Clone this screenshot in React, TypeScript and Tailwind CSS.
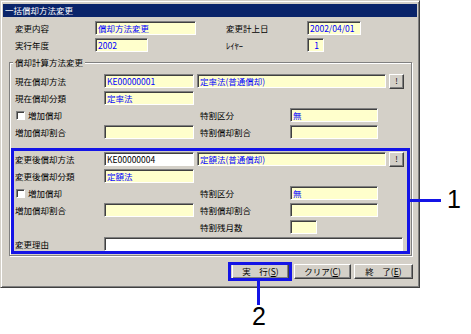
import clsx from "clsx";

const FONT = "font-['Noto_Sans_CJK_JP',sans-serif]";
const SUNKEN =
  "border border-t-[#808080] border-l-[#808080] border-r-white border-b-white shadow-[inset_1px_1px_0_#404040]";
const RAISED =
  "border border-t-white border-l-white border-r-[#404040] border-b-[#404040] shadow-[inset_-1px_-1px_0_#808080]";

function Field({ className, value, white }: { className: string; value?: string; white?: boolean }) {
  return (
    <div
      className={clsx(
        "h-[14px] shrink-0 overflow-hidden whitespace-nowrap pl-[2px] text-[8.5px] leading-[12px]",
        SUNKEN,
        white ? "bg-white text-black" : "bg-[#ffffcc] text-[#0000ff]",
        className
      )}
    >
      {value}
    </div>
  );
}

function Label({ className, children }: { className: string; children: React.ReactNode }) {
  return <div className={clsx("shrink-0 whitespace-nowrap text-[8.5px] leading-[14px]", className)}>{children}</div>;
}

function Check({ label }: { label: string }) {
  return (
    <div className="flex w-[185px] shrink-0 items-center">
      <div className={clsx("ml-[1px] h-[9px] w-[9px] bg-white", SUNKEN)} />
      <span className="ml-[3px] text-[8.5px] leading-[14px]">{label}</span>
    </div>
  );
}

function PickButton() {
  return (
    <div
      className={clsx(
        "ml-[3px] flex h-[15px] w-[15px] shrink-0 items-center justify-center bg-[#d4d0c8] text-[8px] leading-none",
        RAISED
      )}
    >
      !
    </div>
  );
}

function Button({ className, children }: { className: string; children: React.ReactNode }) {
  return (
    <div
      className={clsx(
        "flex h-[15px] shrink-0 items-center justify-center bg-[#d4d0c8] text-[8.5px] leading-none",
        RAISED,
        className
      )}
    >
      {children}
    </div>
  );
}

function Row({ className, children }: { className?: string; children: React.ReactNode }) {
  return <div className={clsx("flex h-[14px] items-center", className)}>{children}</div>;
}

export default function App() {
  return (
    <div className={clsx("relative h-[334px] w-[471px] overflow-hidden bg-white text-black", FONT)}>
      {/* dialog window */}
      <div className="h-[288px] w-[420px] border border-t-[#d4d0c8] border-l-[#d4d0c8] border-r-[#404040] border-b-[#404040] bg-[#d4d0c8] p-[2px] shadow-[inset_1px_1px_0_#fff,inset_-1px_-1px_0_#808080]">
        <div className="mt-[1px] h-[13px] bg-[#0a246a] pl-[2px] text-[8.5px] leading-[13px] text-white">
          一括償却方法変更
        </div>

        <div className="pl-[12px]">
          <Row className="mt-[4px]">
            <Label className="w-[80px]">変更内容</Label>
            <Field className="w-[101px]" value="償却方法変更" />
            <div className="w-[30px] shrink-0" />
            <Label className="w-[81px]">変更計上日</Label>
            <Field className="w-[54px]" value="2002/04/01" />
          </Row>
          <Row className="mt-[3px]">
            <Label className="w-[80px]">実行年度</Label>
            <Field className="w-[53px]" value="2002" />
            <div className="w-[78px] shrink-0" />
            <Label className="w-[81px]">ﾚｲﾔｰ</Label>
            <Field className="w-[17px] text-center" value="1" />
          </Row>
        </div>

        {/* group box */}
        <div className="ml-[6px] mt-[10px] w-[403px] border border-[#808080] pb-[1px] shadow-[inset_1px_1px_0_#fff,1px_1px_0_#fff]">
          <div className="-mt-[7px] ml-[3px] h-[12px] w-fit bg-[#d4d0c8] px-[2px] text-[8.5px] leading-[12px]">
            償却計算方法変更
          </div>

          <div className="pl-[5px]">
            <Row className="mt-[6px]">
              <Label className="w-[89px]">現在償却方法</Label>
              <Field className="w-[90px]" value="KE00000001" />
              <Field className="ml-[3px] w-[189px]" value="定率法(普通償却)" />
              <PickButton />
            </Row>
            <Row className="mt-[3px]">
              <Label className="w-[89px]">現在償却分類</Label>
              <Field className="w-[90px]" value="定率法" />
            </Row>
            <Row className="mt-[3px]">
              <Check label="増加償却" />
              <Label className="w-[90px]">特割区分</Label>
              <Field className="w-[88px]" value="無" />
            </Row>
            <Row className="mt-[3px]">
              <Label className="w-[89px]">増加償却割合</Label>
              <Field className="w-[90px]" />
              <div className="w-[6px] shrink-0" />
              <Label className="w-[90px]">特割償却割合</Label>
              <Field className="w-[88px]" />
            </Row>
          </div>

          {/* highlighted block (callout 1) */}
          <div className="ml-[1px] mt-[9px] w-[399px] border-[3px] border-[#1414e6] pl-[1px]">
            <Row className="mt-[1px]">
              <Label className="w-[89px]">変更後償却方法</Label>
              <Field className="w-[90px]" value="KE00000004" white />
              <Field className="ml-[3px] w-[189px]" value="定額法(普通償却)" />
              <PickButton />
            </Row>
            <Row className="mt-[3px]">
              <Label className="w-[89px]">変更後償却分類</Label>
              <Field className="w-[90px]" value="定額法" />
            </Row>
            <Row className="mt-[3px]">
              <Check label="増加償却" />
              <Label className="w-[90px]">特割区分</Label>
              <Field className="w-[88px]" value="無" />
            </Row>
            <Row className="mt-[3px]">
              <Label className="w-[89px]">増加償却割合</Label>
              <Field className="w-[90px]" />
              <div className="w-[6px] shrink-0" />
              <Label className="w-[90px]">特割償却割合</Label>
              <Field className="w-[88px]" />
            </Row>
            <Row className="mt-[3px]">
              <div className="w-[185px] shrink-0" />
              <Label className="w-[90px]">特割残月数</Label>
              <Field className="w-[27px]" />
            </Row>
            <Row className="mt-[3px]">
              <Label className="w-[89px]">変更理由</Label>
              <Field className="w-[299px]" white />
            </Row>
          </div>
        </div>

        {/* buttons */}
        <div className="mt-[8px] flex pl-[229px]">
          <div className="relative">
            <Button className="w-[57px]">
              実　行(<span className="underline">S</span>)
            </Button>
            <div className="absolute -left-[4px] -top-[2px] h-[19px] w-[64px] border-[3px] border-[#1414e6]" />
          </div>
          <Button className="ml-[5px] w-[57px]">
            クリア(<span className="underline">C</span>)
          </Button>
          <Button className="ml-[3px] w-[59px]">
            終　了(<span className="underline">E</span>)
          </Button>
        </div>
      </div>

      {/* callouts */}
      <div className="absolute left-[410px] top-[199px] h-[3px] w-[31px] bg-[#1414e6]" />
      <div className="absolute left-[447px] top-[187px] font-['Liberation_Sans',sans-serif] text-[25px] leading-[25px]">
        1
      </div>
      <div className="absolute left-[257px] top-[281px] h-[24px] w-[3px] bg-[#1414e6]" />
      <div className="absolute left-[252px] top-[304px] font-['Liberation_Sans',sans-serif] text-[25px] leading-[25px]">
        2
      </div>
    </div>
  );
}
